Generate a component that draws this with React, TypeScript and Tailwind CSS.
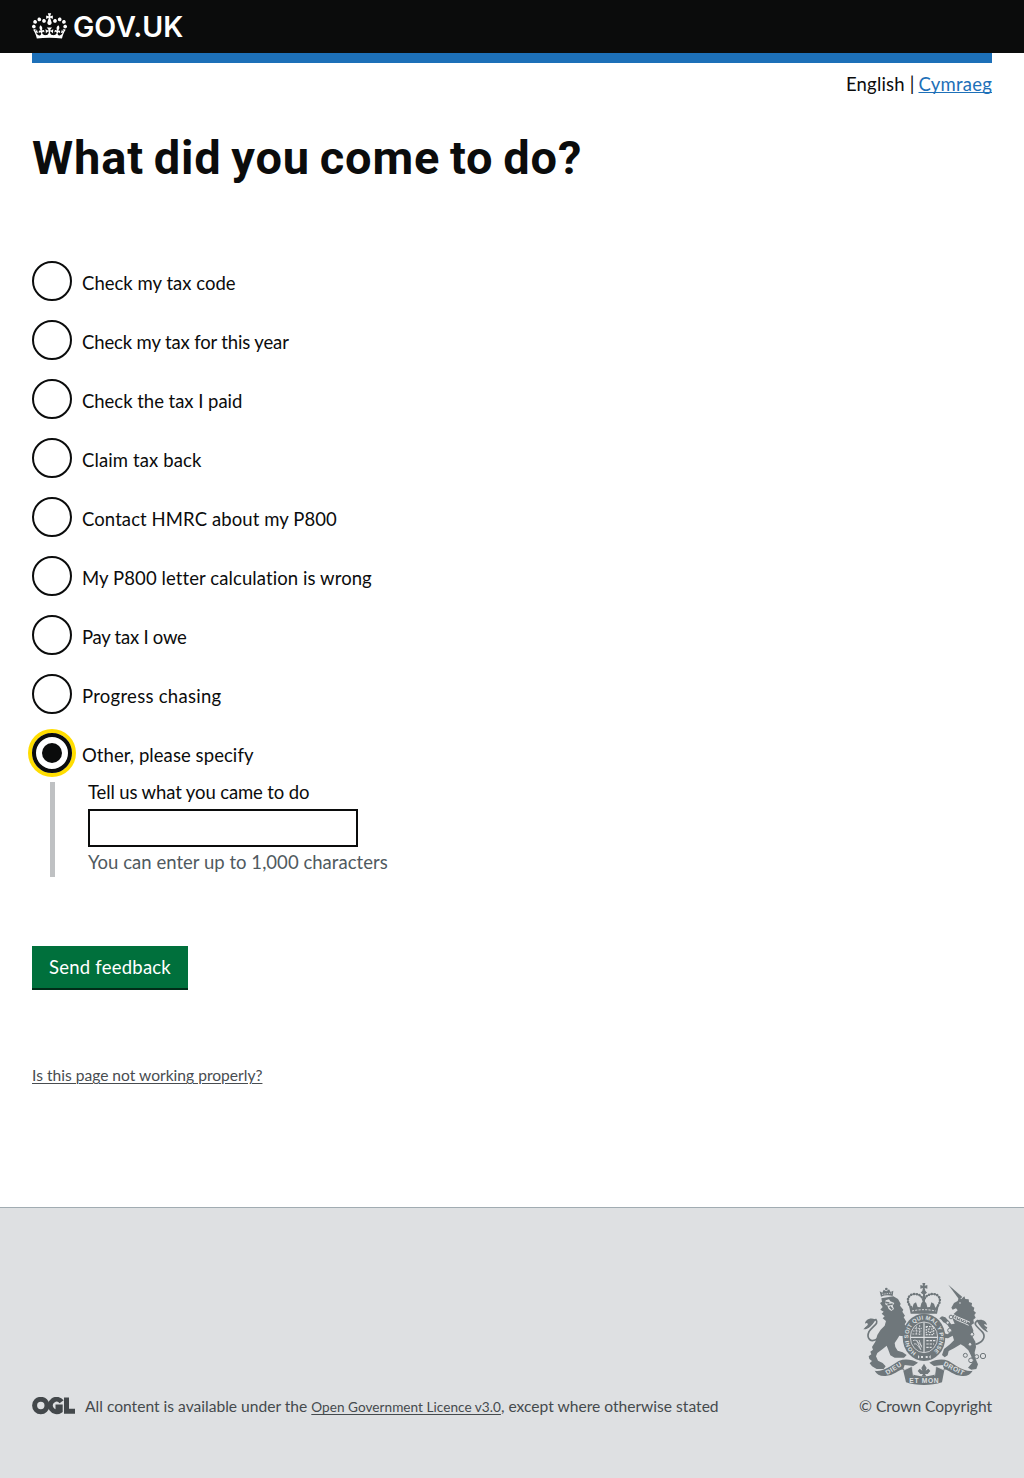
const options = [
  { label: "Check my tax code", tracking: "tracking-[0.02px]" },
  { label: "Check my tax for this year", tracking: "tracking-[-0.14px]" },
  { label: "Check the tax I paid", tracking: "tracking-[-0.03px]" },
  { label: "Claim tax back", tracking: "tracking-[0.11px]" },
  { label: "Contact HMRC about my P800", tracking: "tracking-[0.09px]" },
  { label: "My P800 letter calculation is wrong", tracking: "tracking-[0.09px]" },
  { label: "Pay tax I owe", tracking: "tracking-[-0.25px]" },
  { label: "Progress chasing", tracking: "tracking-[0.28px]" },
];

function Crown() {
  return (
    <svg viewBox="0 0 132 97" className="h-[26px] w-[35px] fill-white" aria-hidden="true">
      <path d="M25 30.2c3.5 1.5 7.7-.2 9.1-3.7 1.5-3.6-.2-7.8-3.9-9.2-3.6-1.4-7.6.3-9.1 3.9-1.4 3.5.3 7.5 3.9 9zM9 39.5c3.6 1.5 7.8-.2 9.2-3.7 1.5-3.6-.2-7.8-3.9-9.1-3.6-1.5-7.6.2-9.1 3.8-1.4 3.5.3 7.5 3.8 9zM4.4 57.2c3.5 1.5 7.7-.2 9.1-3.8 1.5-3.6-.2-7.7-3.9-9.1-3.5-1.5-7.6.3-9.1 3.8-1.4 3.5.3 7.6 3.9 9.1zm38.3-21.4c3.5 1.5 7.7-.2 9.1-3.8 1.5-3.6-.2-7.7-3.9-9.1-3.6-1.5-7.6.3-9.1 3.8-1.3 3.6.4 7.7 3.9 9.1zm64.4-5.6c-3.6 1.5-7.8-.2-9.1-3.7-1.5-3.6.2-7.8 3.8-9.2 3.6-1.4 7.7.3 9.2 3.9 1.3 3.5-.4 7.5-3.9 9zm15.9 9.3c-3.6 1.5-7.7-.2-9.1-3.7-1.5-3.6.2-7.8 3.7-9.1 3.6-1.5 7.7.2 9.2 3.8 1.5 3.5-.3 7.5-3.8 9zm4.7 17.7c-3.6 1.5-7.8-.2-9.2-3.8-1.5-3.6.2-7.7 3.9-9.1 3.6-1.5 7.7.3 9.2 3.8 1.3 3.5-.4 7.6-3.9 9.1zM89.3 35.8c-3.6 1.5-7.8-.2-9.2-3.8-1.4-3.6.2-7.7 3.9-9.1 3.6-1.5 7.7.3 9.2 3.8 1.4 3.6-.3 7.7-3.9 9.1zM69.7 17.7l8.9 4.7V9.3l-8.9 2.8c-.2-.3-.5-.6-.9-.9L72.4 0H59.6l3.5 11.2c-.3.3-.6.5-.9.9l-8.8-2.8v13.1l8.8-4.7c.3.3.6.7.9.9l-5 15.4v.1c-.2.8-.4 1.6-.4 2.4 0 4.1 3.1 7.5 7 8.1h.2c.3 0 .7.1 1 .1.4 0 .7 0 1-.1h.2c4-.6 7.1-4.1 7.1-8.1 0-.8-.1-1.7-.4-2.4V34l-5.1-15.4c.4-.2.7-.6 1-.9zM66 92.8c16.9 0 32.8 1.1 47.1 3.2 4-16.9 8.9-26.7 14-33.5l-9.6-3.4c1 4.9 1.1 7.2 0 10.2-1.5-1.4-3-4.3-4.2-8.7L108.6 76c2.8-2 5-3.2 7.5-3.3-4.4 9.4-10 11.9-13.6 11.2-4.3-.8-6.3-4.6-5.6-7.9 1-4.7 5.7-5.9 8-.5 4.3-8.7-3-11.4-7.6-8.8 7.1-7.2 7.9-13.5 2.1-21.1-8 6.1-8.1 12.3-4.5 20.8-4.7-5.4-12.1-2.5-9.5 6.2 3.4-5.2 7.9-2 7.2 3.1-.6 4.3-6.4 7.8-13.5 7.2-10.3-.9-10.9-8-11.2-13.8 2.5-.5 7.1 1.8 11 7.3L80.2 60c-4.1 4.4-8 5.3-12.3 5.4 1.4-4.4 8-11.6 8-11.6H55.5s6.4 7.2 7.9 11.6c-4.2-.1-8-1-12.3-5.4l1.4 16.4c3.9-5.5 8.5-7.7 10.9-7.3-.3 5.8-.9 12.8-11.1 13.8-7.2.6-12.9-2.9-13.5-7.2-.7-5 3.8-8.3 7.1-3.1 2.7-8.7-4.6-11.6-9.4-6.2 3.7-8.5 3.6-14.7-4.6-20.8-5.8 7.6-5 13.9 2.2 21.1-4.7-2.6-11.9.1-7.7 8.8 2.3-5.5 7.1-4.2 8.1.5.7 3.3-1.3 7.1-5.7 7.9-3.5.7-9-1.8-13.5-11.2 2.5.1 4.7 1.3 7.5 3.3l-4.7-15.4c-1.2 4.4-2.7 7.2-4.3 8.7-1.1-3-.9-5.3 0-10.2l-9.5 3.4c5 6.9 9.9 16.7 14 33.5 14.8-2.1 30.8-3.2 47.7-3.2z" />
    </svg>
  );
}

function OglMark() {
  return (
    <svg viewBox="0 0 43 18" className="h-[18px] w-[43px] shrink-0" fill="none" stroke="#43484b" strokeWidth="5" aria-hidden="true">
      <circle cx="8.8" cy="8.5" r="6.2" />
      <path d="M29.6 4.8A6.2 6.2 0 1 0 28.2 13.6V10H23.5" />
      <path d="M34.5 .5V14.3H43" />
    </svg>
  );
}

function Crest() {
  const ink = "#6f777b";
  const paper = "#dee0e2";
  return (
    <svg viewBox="36 21 378 309" className="h-[103px] w-[126px]" role="img" aria-label="Royal coat of arms">
      {/* ribbon behind the supporters */}
      <path d="M74 287C96 292 122 274 146 258C166 250 186 254 204 263L190 273L164 270L159 284C148 282 132 303 106 303C90 304 80 298 74 287Z" fill={ink} />
      <path d="M368 287C346 292 320 274 296 258C276 250 256 254 238 263L252 273L278 270L283 284C294 282 310 303 336 303C352 304 362 298 368 287Z" fill={ink} />

      {/* lion */}
      <path d="M93 65L89 49L97 53L101 44L109 49L117 43L122 51L130 47L128 63Q110 58 93 65Z" fill={ink} />
      <circle cx="109" cy="42" r="4" fill={ink} />
      <path d="M96 58l30-4" stroke={paper} strokeWidth="2.5" strokeDasharray="4 3" />
      <path d="M94 70L130 64L144 72L152 86L150 92L160 104L157 110L165 122L161 127L169 140L164 148L174 160L182 178L186 205L170 200L160 184L148 182L142 192L134 204L136 216L143 227L158 232L170 240L162 248L134 248L121 241L114 222L110 212L98 222L82 234L78 244L84 257L98 264L107 274L101 282L80 282L66 274L59 265L66 258L58 252L56 244L64 238L61 230L69 224L66 216L76 200L82 180L92 164L104 152L108 138L98 130L104 124L95 116L101 110L91 104L98 96L90 84L96 80Z" fill={ink} />
      <path d="M107 76L117 73L121 79L133 84L128 92L132 102L124 108L116 102L112 92L105 87Z" fill={paper} />
      <path d="M106 82l12 2M112 90l16-3M119 95l8 8" stroke={ink} strokeWidth="5" />
      <path d="M84 190C62 206 48 190 57 170C68 152 88 146 78 134C66 134 62 158 45 160" fill="none" stroke={ink} strokeWidth="5" />
      <path d="M40 163C52 164 66 154 76 134C62 126 46 134 45 146C50 142 55 145 53 150Z" fill={ink} />

      {/* unicorn */}
      <path d="M295 29L337 66L328 74Z" fill={ink} />
      <path d="M304 98L312 84L323 78L326 69L334 72L343 64L346 72L356 73L357 81L366 84L365 93L373 98L371 107L378 113L373 120L377 128L370 134L372 145L364 150L370 166L368 186L376 200L378 216L374 232L376 250L384 268L379 282L364 284L354 278L366 264L364 244L355 226L342 214L332 208L312 220L296 228L293 241L284 247L276 240L282 222L300 208L312 196L308 182L294 190L280 188L272 178L282 174L292 178L306 168L298 158L290 146L280 142L274 134L268 130L276 124L286 127L296 138L304 148L314 146L308 132L310 118L323 106L318 100L308 104Z" fill={ink} />
      <path d="M308 117C322 128 342 132 360 142M305 125C320 138 340 142 356 151" fill="none" stroke={paper} strokeWidth="3" />
      <path d="M312 124l6 5 7 0 6 6 8 0 6 6 8 0" fill="none" stroke={paper} strokeWidth="4" strokeDasharray="4 3" />
      <circle cx="330" cy="84" r="2.5" fill={paper} />
      <path d="M376 208C396 204 409 188 398 172C384 156 366 148 382 137C394 136 398 154 411 160" fill="none" stroke={ink} strokeWidth="5" />
      <path d="M414 172C403 168 388 154 380 137C394 130 410 138 411 150C405 146 400 148 402 153Z" fill={ink} />
      <g fill={paper} stroke={ink} strokeWidth="3">
        <circle cx="303" cy="126" r="5.5" />
        <circle cx="293" cy="143" r="5" />
        <circle cx="299" cy="166" r="6" />
        <circle cx="366" cy="178" r="5.5" />
        <circle cx="360" cy="208" r="5.5" />
        <circle cx="346" cy="241" r="6" />
        <circle cx="363" cy="256" r="7" />
        <circle cx="380" cy="245" r="6" />
        <circle cx="399" cy="243" r="8" />
      </g>

      {/* crown */}
      <path d="M183 96C166 78 174 57 194 57C209 57 219 66 221 80C223 66 234 57 249 57C269 57 278 78 260 96" fill="none" stroke={ink} strokeWidth="7.5" strokeLinecap="round" strokeDasharray="0.5 8" />
      <path d="M183 96C166 78 174 57 194 57C209 57 219 66 221 80C223 66 234 57 249 57C269 57 278 78 260 96" fill="none" stroke={ink} strokeWidth="3" />
      <path d="M217 24h9l-2 8 8-2v11l-8-2 2 8 5 6-9 7-10-7 5-6 2-8-8 2V30l8 2zM219 54h6v35h-6z" fill={ink} />
      <path d="M176 88L187 98L191 86L198 82L203 96L211 97L214 85L221 76L229 85L232 97L240 96L244 82L252 86L256 98L267 88L261 116H182Z" fill={ink} />
      <path d="M186 108q35-8 71 0" fill="none" stroke={paper} strokeWidth="3" strokeDasharray="6 4" />

      {/* garter and shield */}
      <ellipse cx="222" cy="187" rx="64" ry="71" fill={ink} />
      <ellipse cx="222" cy="187" rx="41" ry="46" fill="none" stroke={paper} strokeWidth="2.5" />
      <path id="garter-arc" d="M199 233A47 53 0 1 1 245 233" fill="none" />
      <text fill={paper} fontFamily="Liberation Sans" fontWeight="700" fontSize="17">
        <textPath href="#garter-arc" textLength="258">HONI SOIT QUI MAL Y PENSE</textPath>
      </text>
      <g fill="none" stroke={paper} strokeWidth="3.5">
        <path d="M222 142v90M181 187h82" />
        <path d="M194 160h22M188 168h28M187 177h28M199 154v26M209 150v30" strokeDasharray="6 3" strokeWidth="2.5" />
        <path d="M229 155h22v24h-22zM235 162h11v10h-11z" strokeDasharray="5 3" />
        <path d="M189 197c12-6 16 9 26 15M192 207c8-3 12 6 18 14M200 195l13 30M207 195l8 22" strokeWidth="2.5" />
        <path d="M229 197h27M229 207h23M229 217h16" strokeDasharray="7 3" />
      </g>
      <path d="M213 243h6v6h-6zM227 243h6v6h-6zM204 240l5 6-5 5zM242 240l-5 6 5 5z" fill={paper} />

      {/* motto */}
      <path d="M158 280C178 298 198 304 222 304C246 304 266 298 284 280L276 322C259 328 241 330 222 330C202 330 183 328 168 322Z" fill={ink} />
      <path d="M160 286L186 274L190 302M284 286L258 274L254 302" fill={ink} stroke={paper} strokeWidth="2" />
      <path d="M222 266L230 279L227 287L235 281L241 288L233 297H225L229 304H215L219 297H211L203 288L209 281L217 287L214 279Z" fill={ink} />
      <g fill={paper} fontFamily="Liberation Sans" fontWeight="700" fontSize="20">
        <text x="112" y="300" textLength="52" transform="rotate(-32 112 300)">DIEU</text>
        <text x="178" y="324" textLength="88">ET MON</text>
        <text x="279" y="271" textLength="66" transform="rotate(27 279 271)">DROIT</text>
      </g>
    </svg>
  );
}

export default function App() {
  return (
    <div className="flex h-[1478px] flex-col bg-white font-['Lato',sans-serif] text-[18.5px] leading-[25px] text-[#0b0c0c] [font-variant-ligatures:none]">
      <header className="h-[53px] bg-[#0b0c0c] px-8">
        <a className="flex h-[51px] items-center gap-[6px] text-white">
          <Crown />
          <span className="pt-[2px] font-['Inter',sans-serif] text-[28.5px] leading-[51px] font-semibold">GOV.UK</span>
        </a>
      </header>
      <main className="flex-1 px-8">
        <div className="h-[10px] bg-[#1d70b8]" />
        <nav className="flex justify-end gap-1 pt-[9px]">
          <span className="tracking-[0.18px]">English |</span>
          <a className="tracking-[0.22px] text-[#1d70b8] underline decoration-1 underline-offset-[1px] [text-decoration-skip-ink:none]">Cymraeg</a>
        </nav>
        <h1 className="mt-9 font-['Roboto',sans-serif] text-[47px] leading-[50px] font-bold tracking-[0.85px] [word-spacing:-2.8px]">
          What did you come to do?
        </h1>
        <div className="mt-[78px] flex flex-col gap-[19px]">
          {options.map(({ label, tracking }) => (
            <label key={label} className="flex h-10 items-center gap-[10px]">
              <span className="size-10 rounded-full border-2 border-[#0b0c0c]" />
              <span className={`pt-[5px] ${tracking}`}>{label}</span>
            </label>
          ))}
          <label className="flex h-10 items-center gap-[10px]">
            <span className="flex size-10 items-center justify-center rounded-full border-4 border-[#0b0c0c] ring-4 ring-[#ffdd00]">
              <span className="size-5 rounded-full bg-[#0b0c0c]" />
            </span>
            <span className="pt-[5px] tracking-[0.07px]">Other, please specify</span>
          </label>
        </div>
        <div className="mt-[9px] ml-[18px] flex h-[95px] flex-col items-start border-l-[5px] border-[#bfc1c3] pl-[33px]">
          <label htmlFor="reason" className="mt-[-2px] tracking-[-0.12px]">Tell us what you came to do</label>
          <input id="reason" className="mt-1 h-[38px] w-[270px] border-2 border-[#0b0c0c] bg-white px-1" />
          <span className="mt-[3px] tracking-[0.03px] whitespace-nowrap text-[#505a5f]">You can enter up to 1,000 characters</span>
        </div>
        <button className="mt-[69px] block h-[42px] w-[156px] bg-[#00703c] tracking-[0.23px] text-white shadow-[0_2px_0_#002d18]">
          Send feedback
        </button>
        <a className="mt-[75px] block text-[15.6px] text-[#484c50] underline decoration-1 underline-offset-2">
          Is this page not working properly?
        </a>
      </main>
      <footer className="flex h-[271px] items-start justify-between border-t border-[#a1acb2] bg-[#dee0e2] px-8 text-[15.6px] leading-5 text-[#454a4d]">
        <div className="mt-[186px] flex items-center gap-[10px]">
          <OglMark />
          <p className="pt-[2px] whitespace-pre">
            All content is available under the{" "}
            <a className="text-[13.6px] tracking-[0.03px] underline decoration-1 underline-offset-2">Open Government Licence v3.0</a>
            , except where otherwise stated
          </p>
        </div>
        <div className="mt-[74px] flex flex-col items-end">
          <div className="mr-1"><Crest /></div>
          <span className="mt-[5px] pt-[6px] tracking-[-0.05px]">© Crown Copyright</span>
        </div>
      </footer>
    </div>
  );
}
